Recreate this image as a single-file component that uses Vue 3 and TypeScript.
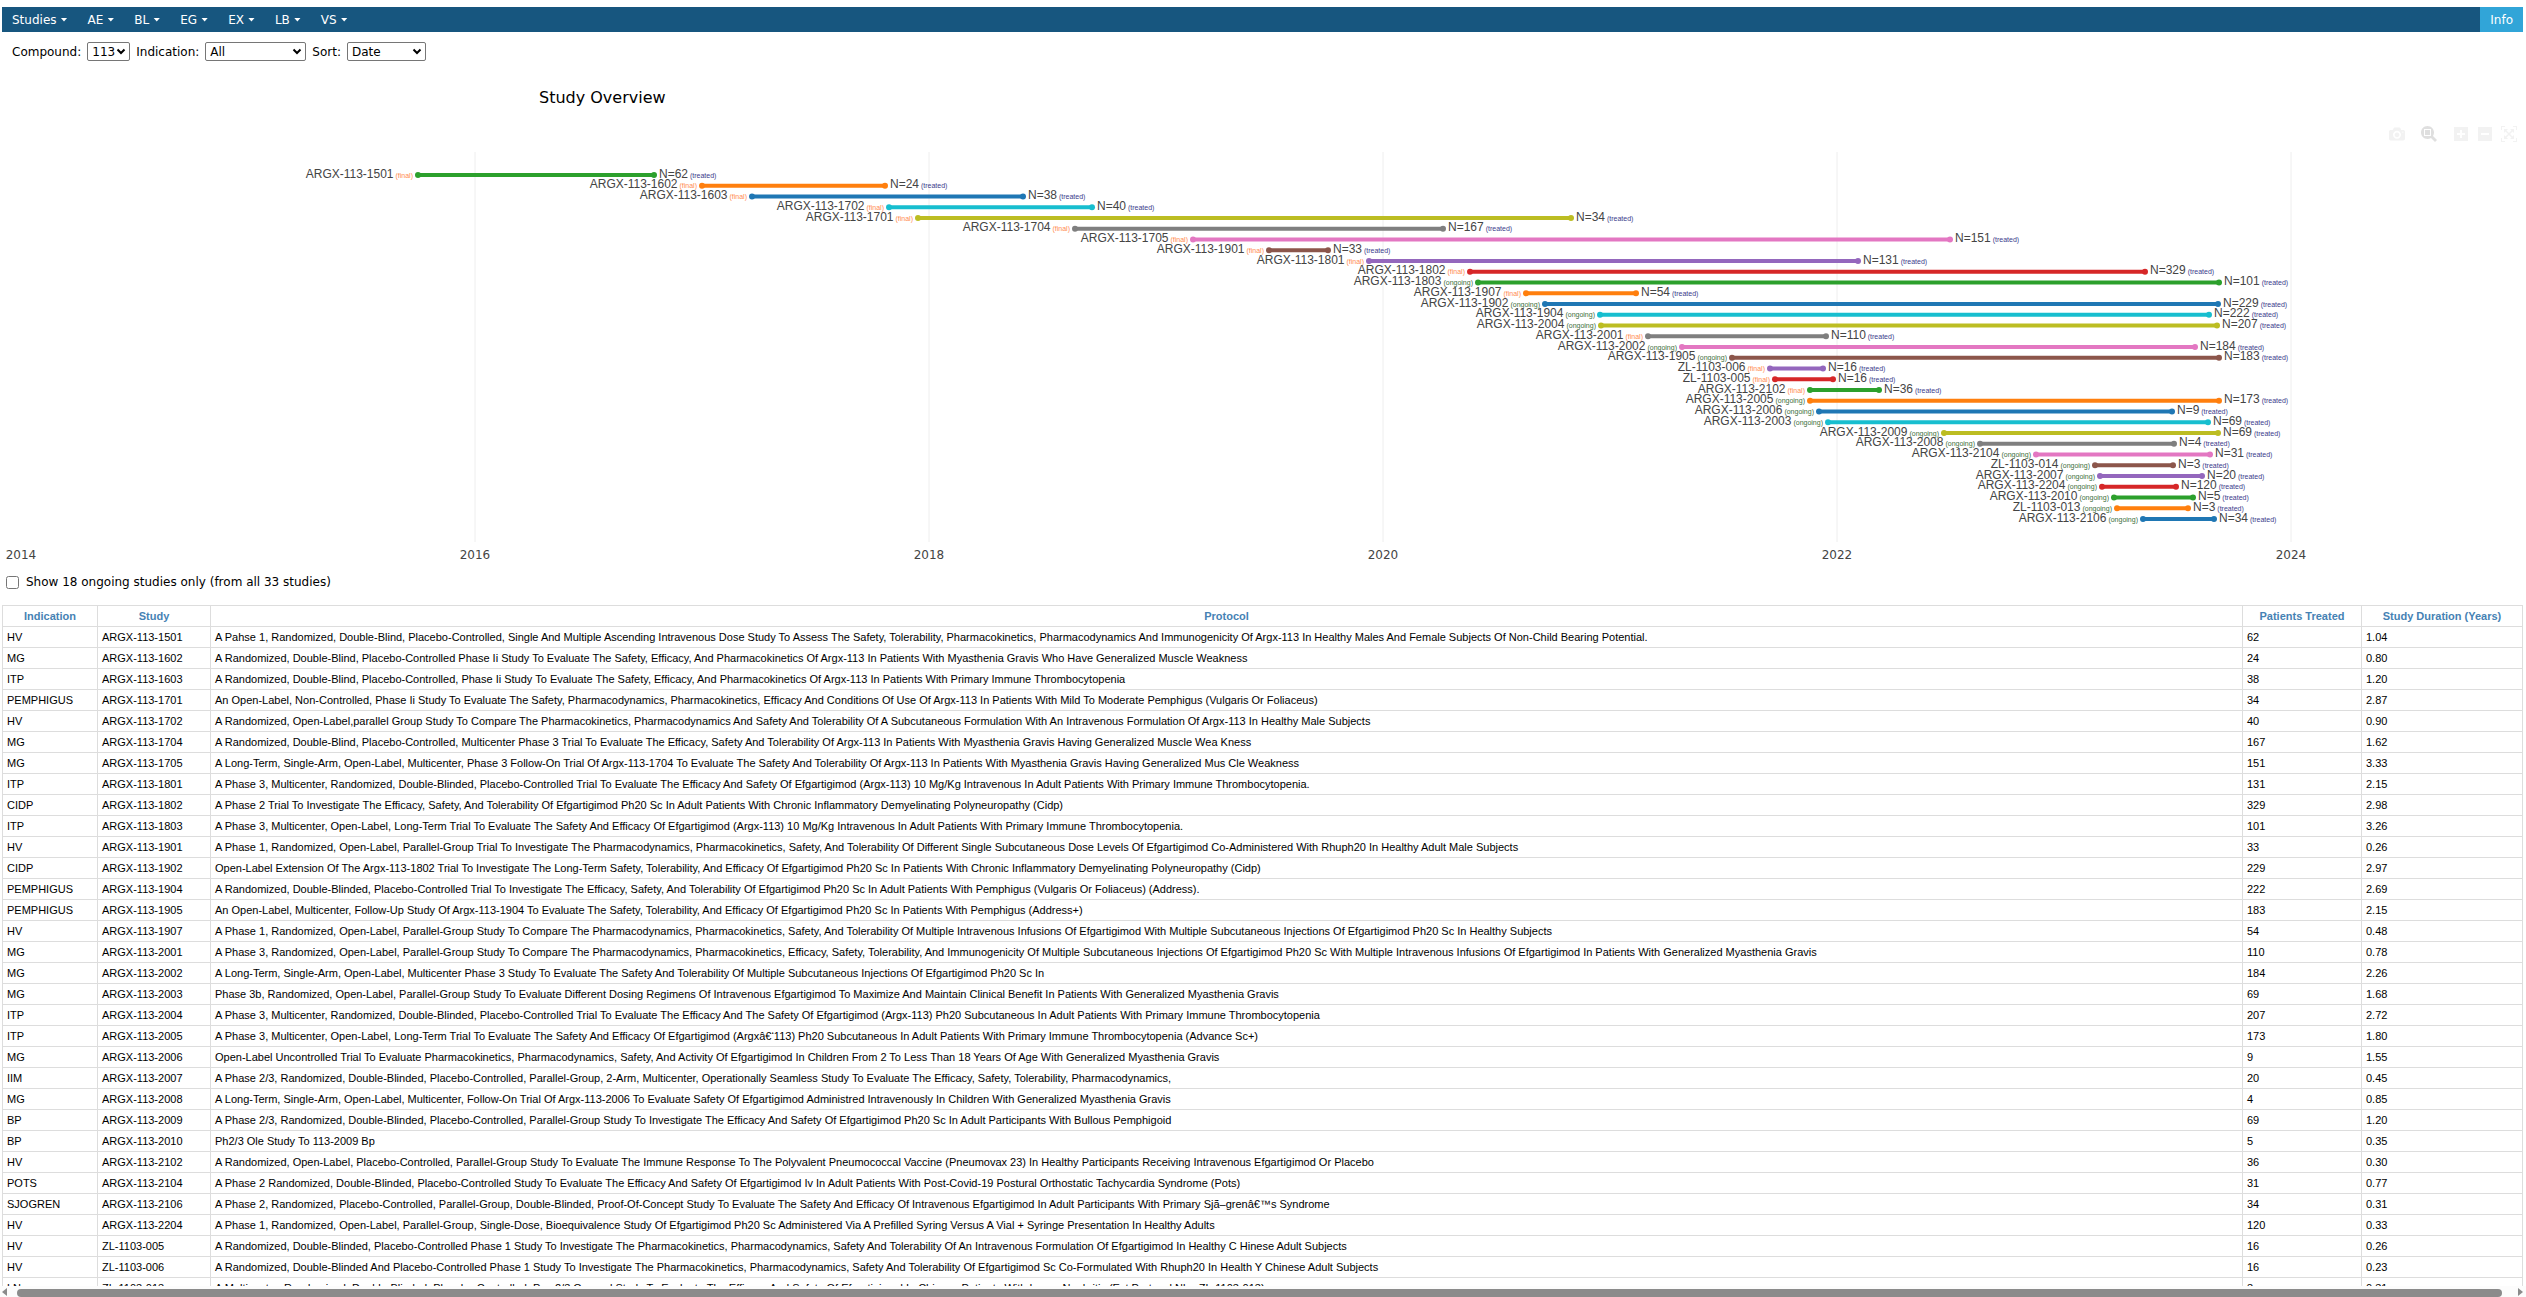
<script setup lang="ts">
import { computed, ref } from 'vue'

type Status = 'final' | 'ongoing'

interface Bar {
  study: string
  status: Status
  from: number
  to: number
  treated: number
}

interface StudyRow {
  indication: string
  study: string
  protocol: string
  treated: number
  duration: string
}

const menus = ['Studies', 'AE', 'BL', 'EG', 'EX', 'LB', 'VS']

const compound = ref('113')
const indication = ref('All')
const sort = ref('Date')
const ongoingOnly = ref(false)

/* Timeline units: one year is 227 units, the axis starts at 2014. */
const SPAN = 2521
const ticks = [
  { year: 2014, at: 19 },
  { year: 2016, at: 473 },
  { year: 2018, at: 927 },
  { year: 2020, at: 1381 },
  { year: 2022, at: 1835 },
  { year: 2024, at: 2289 },
]
const palette = [
  '#2ca02c', '#ff7f0e', '#1f77b4', '#17becf', '#bcbd22',
  '#7f7f7f', '#e377c2', '#8c564b', '#9467bd', '#d62728',
]
const FIRST_ROW = 23
const LAST_ROW = 367

const bar = (study: string, status: Status, from: number, to: number, treated: number): Bar => ({
  study, status, from, to, treated,
})

const bars: Bar[] = [
  bar('ARGX-113-1501', 'final', 416, 652, 62),
  bar('ARGX-113-1602', 'final', 700, 883, 24),
  bar('ARGX-113-1603', 'final', 750, 1021, 38),
  bar('ARGX-113-1702', 'final', 887, 1090, 40),
  bar('ARGX-113-1701', 'final', 916, 1569, 34),
  bar('ARGX-113-1704', 'final', 1073, 1441, 167),
  bar('ARGX-113-1705', 'final', 1191, 1948, 151),
  bar('ARGX-113-1901', 'final', 1267, 1326, 33),
  bar('ARGX-113-1801', 'final', 1367, 1856, 131),
  bar('ARGX-113-1802', 'final', 1468, 2143, 329),
  bar('ARGX-113-1803', 'ongoing', 1476, 2217, 101),
  bar('ARGX-113-1907', 'final', 1524, 1634, 54),
  bar('ARGX-113-1902', 'ongoing', 1543, 2216, 229),
  bar('ARGX-113-1904', 'ongoing', 1598, 2207, 222),
  bar('ARGX-113-2004', 'ongoing', 1599, 2215, 207),
  bar('ARGX-113-2001', 'final', 1646, 1824, 110),
  bar('ARGX-113-2002', 'ongoing', 1680, 2193, 184),
  bar('ARGX-113-1905', 'ongoing', 1730, 2217, 183),
  bar('ZL-1103-006', 'final', 1768, 1821, 16),
  bar('ZL-1103-005', 'final', 1773, 1831, 16),
  bar('ARGX-113-2102', 'final', 1808, 1877, 36),
  bar('ARGX-113-2005', 'ongoing', 1808, 2217, 173),
  bar('ARGX-113-2006', 'ongoing', 1817, 2170, 9),
  bar('ARGX-113-2003', 'ongoing', 1826, 2206, 69),
  bar('ARGX-113-2009', 'ongoing', 1942, 2216, 69),
  bar('ARGX-113-2008', 'ongoing', 1978, 2172, 4),
  bar('ARGX-113-2104', 'ongoing', 2034, 2208, 31),
  bar('ZL-1103-014', 'ongoing', 2093, 2171, 3),
  bar('ARGX-113-2007', 'ongoing', 2098, 2200, 20),
  bar('ARGX-113-2204', 'ongoing', 2100, 2174, 120),
  bar('ARGX-113-2010', 'ongoing', 2112, 2191, 5),
  bar('ZL-1103-013', 'ongoing', 2115, 2186, 3),
  bar('ARGX-113-2106', 'ongoing', 2141, 2212, 34),
]

const pct = (v: number): string => `${(v / SPAN) * 100}%`

const plotted = computed(() =>
  bars
    .map((b, i) => {
      const y = FIRST_ROW + (i * (LAST_ROW - FIRST_ROW)) / (bars.length - 1)
      return {
        ...b,
        x1: pct(b.from),
        x2: pct(b.to),
        y,
        textY: Math.floor(y + 3),
        color: palette[i % palette.length],
      }
    })
    .filter((b) => !ongoingOnly.value || b.status === 'ongoing'),
)

const row = (
  ind: string, study: string, protocol: string, treated: number, duration: string,
): StudyRow => ({ indication: ind, study, protocol, treated, duration })

const rows: StudyRow[] = [
  row('HV', 'ARGX-113-1501', 'A Pahse 1, Randomized, Double-Blind, Placebo-Controlled, Single And Multiple Ascending Intravenous Dose Study To Assess The Safety, Tolerability, Pharmacokinetics, Pharmacodynamics And Immunogenicity Of Argx-113 In Healthy Males And Female Subjects Of Non-Child Bearing Potential.', 62, '1.04'),
  row('MG', 'ARGX-113-1602', 'A Randomized, Double-Blind, Placebo-Controlled Phase Ii Study To Evaluate The Safety, Efficacy, And Pharmacokinetics Of Argx-113 In Patients With Myasthenia Gravis Who Have Generalized Muscle Weakness', 24, '0.80'),
  row('ITP', 'ARGX-113-1603', 'A Randomized, Double-Blind, Placebo-Controlled, Phase Ii Study To Evaluate The Safety, Efficacy, And Pharmacokinetics Of Argx-113 In Patients With Primary Immune Thrombocytopenia', 38, '1.20'),
  row('PEMPHIGUS', 'ARGX-113-1701', 'An Open-Label, Non-Controlled, Phase Ii Study To Evaluate The Safety, Pharmacodynamics, Pharmacokinetics, Efficacy And Conditions Of Use Of Argx-113 In Patients With Mild To Moderate Pemphigus (Vulgaris Or Foliaceus)', 34, '2.87'),
  row('HV', 'ARGX-113-1702', 'A Randomized, Open-Label,parallel Group Study To Compare The Pharmacokinetics, Pharmacodynamics And Safety And Tolerability Of A Subcutaneous Formulation With An Intravenous Formulation Of Argx-113 In Healthy Male Subjects', 40, '0.90'),
  row('MG', 'ARGX-113-1704', 'A Randomized, Double-Blind, Placebo-Controlled, Multicenter Phase 3 Trial To Evaluate The Efficacy, Safety And Tolerability Of Argx-113 In Patients With Myasthenia Gravis Having Generalized Muscle Wea Kness', 167, '1.62'),
  row('MG', 'ARGX-113-1705', 'A Long-Term, Single-Arm, Open-Label, Multicenter, Phase 3 Follow-On Trial Of Argx-113-1704 To Evaluate The Safety And Tolerability Of Argx-113 In Patients With Myasthenia Gravis Having Generalized Mus Cle Weakness', 151, '3.33'),
  row('ITP', 'ARGX-113-1801', 'A Phase 3, Multicenter, Randomized, Double-Blinded, Placebo-Controlled Trial To Evaluate The Efficacy And Safety Of Efgartigimod (Argx-113) 10 Mg/Kg Intravenous In Adult Patients With Primary Immune Thrombocytopenia.', 131, '2.15'),
  row('CIDP', 'ARGX-113-1802', 'A Phase 2 Trial To Investigate The Efficacy, Safety, And Tolerability Of Efgartigimod Ph20 Sc In Adult Patients With Chronic Inflammatory Demyelinating Polyneuropathy (Cidp)', 329, '2.98'),
  row('ITP', 'ARGX-113-1803', 'A Phase 3, Multicenter, Open-Label, Long-Term Trial To Evaluate The Safety And Efficacy Of Efgartigimod (Argx-113) 10 Mg/Kg Intravenous In Adult Patients With Primary Immune Thrombocytopenia.', 101, '3.26'),
  row('HV', 'ARGX-113-1901', 'A Phase 1, Randomized, Open-Label, Parallel-Group Trial To Investigate The Pharmacodynamics, Pharmacokinetics, Safety, And Tolerability Of Different Single Subcutaneous Dose Levels Of Efgartigimod Co-Administered With Rhuph20 In Healthy Adult Male Subjects', 33, '0.26'),
  row('CIDP', 'ARGX-113-1902', 'Open-Label Extension Of The Argx-113-1802 Trial To Investigate The Long-Term Safety, Tolerability, And Efficacy Of Efgartigimod Ph20 Sc In Patients With Chronic Inflammatory Demyelinating Polyneuropathy (Cidp)', 229, '2.97'),
  row('PEMPHIGUS', 'ARGX-113-1904', 'A Randomized, Double-Blinded, Placebo-Controlled Trial To Investigate The Efficacy, Safety, And Tolerability Of Efgartigimod Ph20 Sc In Adult Patients With Pemphigus (Vulgaris Or Foliaceus) (Address).', 222, '2.69'),
  row('PEMPHIGUS', 'ARGX-113-1905', 'An Open-Label, Multicenter, Follow-Up Study Of Argx-113-1904 To Evaluate The Safety, Tolerability, And Efficacy Of Efgartigimod Ph20 Sc In Patients With Pemphigus (Address+)', 183, '2.15'),
  row('HV', 'ARGX-113-1907', 'A Phase 1, Randomized, Open-Label, Parallel-Group Study To Compare The Pharmacodynamics, Pharmacokinetics, Safety, And Tolerability Of Multiple Intravenous Infusions Of Efgartigimod With Multiple Subcutaneous Injections Of Efgartigimod Ph20 Sc In Healthy Subjects', 54, '0.48'),
  row('MG', 'ARGX-113-2001', 'A Phase 3, Randomized, Open-Label, Parallel-Group Study To Compare The Pharmacodynamics, Pharmacokinetics, Efficacy, Safety, Tolerability, And Immunogenicity Of Multiple Subcutaneous Injections Of Efgartigimod Ph20 Sc With Multiple Intravenous Infusions Of Efgartigimod In Patients With Generalized Myasthenia Gravis', 110, '0.78'),
  row('MG', 'ARGX-113-2002', 'A Long-Term, Single-Arm, Open-Label, Multicenter Phase 3 Study To Evaluate The Safety And Tolerability Of Multiple Subcutaneous Injections Of Efgartigimod Ph20 Sc In', 184, '2.26'),
  row('MG', 'ARGX-113-2003', 'Phase 3b, Randomized, Open-Label, Parallel-Group Study To Evaluate Different Dosing Regimens Of Intravenous Efgartigimod To Maximize And Maintain Clinical Benefit In Patients With Generalized Myasthenia Gravis', 69, '1.68'),
  row('ITP', 'ARGX-113-2004', 'A Phase 3, Multicenter, Randomized, Double-Blinded, Placebo-Controlled Trial To Evaluate The Efficacy And The Safety Of Efgartigimod (Argx-113) Ph20 Subcutaneous In Adult Patients With Primary Immune Thrombocytopenia', 207, '2.72'),
  row('ITP', 'ARGX-113-2005', 'A Phase 3, Multicenter, Open-Label, Long-Term Trial To Evaluate The Safety And Efficacy Of Efgartigimod (Argxâ€‘113) Ph20 Subcutaneous In Adult Patients With Primary Immune Thrombocytopenia (Advance Sc+)', 173, '1.80'),
  row('MG', 'ARGX-113-2006', 'Open-Label Uncontrolled Trial To Evaluate Pharmacokinetics, Pharmacodynamics, Safety, And Activity Of Efgartigimod In Children From 2 To Less Than 18 Years Of Age With Generalized Myasthenia Gravis', 9, '1.55'),
  row('IIM', 'ARGX-113-2007', 'A Phase 2/3, Randomized, Double-Blinded, Placebo-Controlled, Parallel-Group, 2-Arm, Multicenter, Operationally Seamless Study To Evaluate The Efficacy, Safety, Tolerability, Pharmacodynamics,', 20, '0.45'),
  row('MG', 'ARGX-113-2008', 'A Long-Term, Single-Arm, Open-Label, Multicenter, Follow-On Trial Of Argx-113-2006 To Evaluate Safety Of Efgartigimod Administred Intravenously In Children With Generalized Myasthenia Gravis', 4, '0.85'),
  row('BP', 'ARGX-113-2009', 'A Phase 2/3, Randomized, Double-Blinded, Placebo-Controlled, Parallel-Group Study To Investigate The Efficacy And Safety Of Efgartigimod Ph20 Sc In Adult Participants With Bullous Pemphigoid', 69, '1.20'),
  row('BP', 'ARGX-113-2010', 'Ph2/3 Ole Study To 113-2009 Bp', 5, '0.35'),
  row('HV', 'ARGX-113-2102', 'A Randomized, Open-Label, Placebo-Controlled, Parallel-Group Study To Evaluate The Immune Response To The Polyvalent Pneumococcal Vaccine (Pneumovax 23) In Healthy Participants Receiving Intravenous Efgartigimod Or Placebo', 36, '0.30'),
  row('POTS', 'ARGX-113-2104', 'A Phase 2 Randomized, Double-Blinded, Placebo-Controlled Study To Evaluate The Efficacy And Safety Of Efgartigimod Iv In Adult Patients With Post-Covid-19 Postural Orthostatic Tachycardia Syndrome (Pots)', 31, '0.77'),
  row('SJOGREN', 'ARGX-113-2106', 'A Phase 2, Randomized, Placebo-Controlled, Parallel-Group, Double-Blinded, Proof-Of-Concept Study To Evaluate The Safety And Efficacy Of Intravenous Efgartigimod In Adult Participants With Primary Sjã–grenâ€™s Syndrome', 34, '0.31'),
  row('HV', 'ARGX-113-2204', 'A Phase 1, Randomized, Open-Label, Parallel-Group, Single-Dose, Bioequivalence Study Of Efgartigimod Ph20 Sc Administered Via A Prefilled Syring Versus A Vial + Syringe Presentation In Healthy Adults', 120, '0.33'),
  row('HV', 'ZL-1103-005', 'A Randomized, Double-Blinded, Placebo-Controlled Phase 1 Study To Investigate The Pharmacokinetics, Pharmacodynamics, Safety And Tolerability Of An Intravenous Formulation Of Efgartigimod In Healthy C Hinese Adult Subjects', 16, '0.26'),
  row('HV', 'ZL-1103-006', 'A Randomized, Double-Blinded And Placebo-Controlled Phase 1 Study To Investigate The Pharmacokinetics, Pharmacodynamics, Safety And Tolerability Of Efgartigimod Sc Co-Formulated With Rhuph20 In Health Y Chinese Adult Subjects', 16, '0.23'),
  row('LN', 'ZL-1103-013', 'A Multicenter, Randomized, Double-Blinded, Placebo-Controlled, Poc 2/3 General Study To Evaluate The Efficacy And Safety Of Efgartigimod In Chinese Patients With Lupus Nephritis (Ext Protocol Nbr: ZL-1103-013)', 3, '0.31'),
]

const columns = ['Indication', 'Study', 'Protocol', 'Patients Treated', 'Study Duration (Years)']

const tools = [
  { name: 'Download plot', width: 1000, size: 16, gap: false, active: false, d: 'm500 450c-83 0-150-67-150-150 0-83 67-150 150-150 83 0 150 67 150 150 0 83-67 150-150 150z m400 150h-120c-16 0-34 13-39 29l-31 93c-6 15-23 28-40 28h-340c-16 0-34-13-39-28l-31-94c-6-15-23-28-40-28h-120c-55 0-100-45-100-100v-450c0-55 45-100 100-100h800c55 0 100 45 100 100v450c0 55-45 100-100 100z m-400-550c-138 0-250 112-250 250 0 138 112 250 250 250 138 0 250-112 250-250 0-138-112-250-250-250z m365 380c-19 0-35 16-35 35 0 19 16 35 35 35 19 0 35-16 35-35 0-19-16-35-35-35z' },
  { name: 'Zoom', width: 1000, size: 16, gap: true, active: true, d: 'm1000-25l-250 251c40 63 63 138 63 218 0 224-182 406-407 406-224 0-406-182-406-406s183-406 407-406c80 0 155 22 218 62l250-250 125 125z m-812 250l0 438 437 0 0-438-437 0z m62 375l313 0 0-312-313 0 0 312z' },
  { name: 'Zoom in', width: 875, size: 14, gap: true, active: false, d: 'm1 787l0-875 875 0 0 875-875 0z m687-500l-187 0 0-187-125 0 0 187-188 0 0 125 188 0 0 187 125 0 0-187 187 0 0-125z' },
  { name: 'Zoom out', width: 875, size: 14, gap: false, active: false, d: 'm0 788l0-876 875 0 0 876-875 0z m688-500l-500 0 0 125 500 0 0-125z' },
  { name: 'Autoscale', width: 1000, size: 16, gap: false, active: false, d: 'm250 850l-187 0-63 0 0-62 0-188 63 0 0 188 187 0 0 62z m688 0l-188 0 0-62 188 0 0-188 62 0 0 188 0 62-62 0z m-875-938l0 188-63 0 0-188 0-62 63 0 187 0 0 62-187 0z m875 188l0-188-188 0 0-62 188 0 62 0 0 62 0 188-62 0z m-125 188l-1 0-93-94-156 156 156 156 92-93 2 0 0 250-250 0 0-2 93-92-156-156-156 156 94 92 0 2-250 0 0-250 0 0 93 93 157-156-157-156-93 94 0 0 0-250 250 0 0 0-94 93 156 157 156-157-93-93 0 0 250 0 0 250z' },
]
</script>

<template>
  <div class="app">
    <main class="page">
      <nav class="navbar">
        <button v-for="m in menus" :key="m" type="button" class="menu">
          {{ m }}<span class="caret"></span>
        </button>
        <a href="#info" class="info">Info</a>
      </nav>

      <form class="filters">
        <label for="compound">Compound:</label>
        <select id="compound" v-model="compound" class="compound">
          <option>113</option>
        </select>
        <label for="indication">Indication:</label>
        <select id="indication" v-model="indication" class="indication">
          <option>All</option>
        </select>
        <label for="sort">Sort:</label>
        <select id="sort" v-model="sort" class="sort">
          <option>Date</option>
        </select>
      </form>

      <h1 class="title">Study Overview</h1>

      <div class="modebar">
        <button
          v-for="t in tools"
          :key="t.name"
          type="button"
          :aria-label="t.name"
          :class="['tool', { gap: t.gap, active: t.active }]"
        >
          <svg :width="t.size" height="16" :viewBox="`0 0 ${t.width} 1000`">
            <path :d="t.d" transform="matrix(1 0 0 -1 0 850)" />
          </svg>
        </button>
      </div>

      <svg class="chart" role="img" aria-label="Study timeline">
        <line
          v-for="t in ticks.slice(1)"
          :key="t.year"
          class="grid"
          :x1="pct(t.at)"
          :x2="pct(t.at)"
          y1="0"
          y2="390"
        />
        <g v-for="b in plotted" :key="b.study" :stroke="b.color" :fill="b.color">
          <line class="span" :x1="b.x1" :x2="b.x2" :y1="b.y" :y2="b.y" />
          <circle class="dot" :cx="b.x1" :cy="b.y" r="3" />
          <circle class="dot" :cx="b.x2" :cy="b.y" r="3" />
        </g>
        <g v-for="b in plotted" :key="b.study">
          <text class="label start" :x="b.x1" :y="b.textY" dx="-5">{{ b.study }}<tspan :class="b.status">{{ ` (${b.status})` }}</tspan></text>
          <text class="label" :x="b.x2" :y="b.textY" dx="5">N={{ b.treated }}<tspan class="treated">{{ ' (treated)' }}</tspan></text>
        </g>
        <text v-for="t in ticks" :key="t.year" class="tick" :x="pct(t.at)" y="407">{{ t.year }}</text>
      </svg>

      <label class="ongoing-only">
        <input v-model="ongoingOnly" type="checkbox" />
        <span>Show 18 ongoing studies only (from all 33 studies)</span>
      </label>

      <table class="studies">
        <colgroup>
          <col class="c-indication" />
          <col class="c-study" />
          <col />
          <col class="c-treated" />
          <col class="c-duration" />
        </colgroup>
        <thead>
          <tr>
            <th v-for="c in columns" :key="c" scope="col">{{ c }}</th>
          </tr>
        </thead>
        <tbody>
          <tr v-for="r in rows" :key="r.study">
            <td>{{ r.indication }}</td>
            <td>{{ r.study }}</td>
            <td>{{ r.protocol }}</td>
            <td>{{ r.treated }}</td>
            <td>{{ r.duration }}</td>
          </tr>
        </tbody>
      </table>
    </main>

    <div class="scrollbar" aria-hidden="true">
      <span class="arrow left"></span>
      <span class="thumb"></span>
      <span class="arrow right"></span>
    </div>
  </div>
</template>

<style>
body {
  margin: 0;
  background: #fff;
}
</style>

<style scoped>
.app {
  display: flex;
  flex-direction: column;
  height: 100vh;
  overflow: hidden;
  font: 12px/16px "DejaVu Sans", Verdana, sans-serif;
  color: #000;
}

.page {
  flex: 1;
  min-height: 0;
  overflow: hidden;
  padding: 7px 3px 0 2px;
}

.navbar {
  display: flex;
  height: 25px;
  background: #17567f;
}

.menu,
.info {
  display: flex;
  align-items: center;
  padding: 0 10px;
  border: 0;
  background: none;
  color: #fff;
  font: inherit;
  text-decoration: none;
}

.caret {
  width: 7px;
  height: 4px;
  margin-left: 4px;
  background: #fff;
  clip-path: polygon(0 0, 100% 0, 50% 100%);
}

.info {
  margin-left: auto;
  background: #31a5d8;
}

.filters {
  display: flex;
  align-items: center;
  gap: 6px;
  padding: 10px 10px 0;
}

.filters select {
  appearance: none;
  height: 19px;
  margin: 0;
  padding: 0 0 0 4px;
  border: 1px solid #767676;
  border-radius: 2px;
  background: #fff url("data:image/svg+xml,%3Csvg xmlns='http://www.w3.org/2000/svg' width='10' height='7'%3E%3Cpath d='M1.5 1.5L5 5L8.5 1.5' fill='none' stroke='%23000' stroke-width='2'/%3E%3C/svg%3E") no-repeat right 3px center;
  color: #000;
  font: inherit;
}

.compound {
  width: 43px;
}

.indication {
  width: 101px;
}

.sort {
  width: 79px;
}

.title {
  margin: 26px 0 0 21.3%;
  font-size: 16px;
  line-height: 22px;
  font-weight: normal;
}

.modebar {
  display: flex;
  justify-content: flex-end;
  margin-top: 13px;
  padding-right: 2px;
}

.tool {
  display: flex;
  align-items: center;
  justify-content: center;
  width: 24px;
  height: 24px;
  padding: 0;
  border: 0;
  background: none;
  fill: #f2f2f2;
}

.tool.gap {
  margin-left: 8px;
}

.tool.active {
  fill: #dfdfdf;
}

.chart {
  display: block;
  width: 100%;
  height: 413px;
  margin-top: 6px;
  overflow: visible;
}

.grid {
  stroke: #eee;
  stroke-width: 1;
}

.span {
  stroke-width: 4;
}

.dot {
  stroke: none;
}

.label {
  font: 12px "Liberation Sans", Arial, sans-serif;
  fill: #444;
  white-space: pre;
}

.start {
  text-anchor: end;
}

.label tspan {
  font-size: 7px;
}

.final {
  fill: #ff8c50;
}

.ongoing {
  fill: #3c6e3c;
}

.treated {
  fill: #3c3c8c;
}

.tick {
  fill: #444;
  text-anchor: middle;
}

.ongoing-only {
  display: flex;
  align-items: center;
  width: fit-content;
  margin-top: 9px;
}

.ongoing-only input {
  width: 13px;
  height: 13px;
  margin: 0 7px 0 4px;
}

.studies {
  width: 100%;
  margin-top: 15px;
  border-collapse: collapse;
  table-layout: fixed;
  font: 11px/20px "Liberation Sans", Arial, sans-serif;
}

.c-indication {
  width: 95px;
}

.c-study {
  width: 113px;
}

.c-treated {
  width: 119px;
}

.c-duration {
  width: 161px;
}

.studies th,
.studies td {
  height: 20px;
  padding: 0 4px;
  border: 1px solid #ddd;
  text-align: left;
  white-space: nowrap;
  overflow: hidden;
}

.studies th {
  color: #4682b4;
  text-align: center;
}

.scrollbar {
  display: flex;
  align-items: center;
  gap: 10px;
  height: 11px;
  padding: 0 3px 0 2px;
  background: #fcfcfc;
}

.thumb {
  flex: 1;
  align-self: flex-end;
  height: 8px;
  border-radius: 4px;
  background: #8b8b8b;
}

.arrow {
  border: 4px solid transparent;
}

.arrow.left {
  border-left: 0;
  border-right: 5px solid #8b8b8b;
}

.arrow.right {
  margin-left: 6px;
  border-right: 0;
  border-left: 5px solid #8b8b8b;
}
</style>
